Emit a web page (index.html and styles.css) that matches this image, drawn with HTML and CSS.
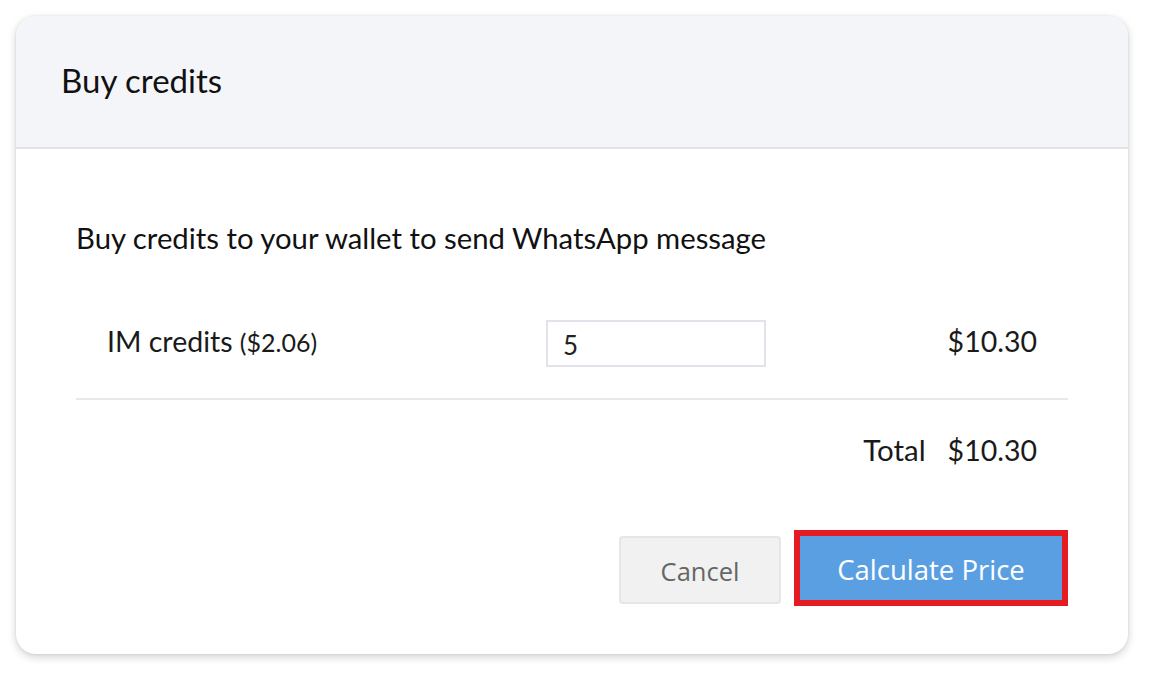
FILE: index.html
```html
<!DOCTYPE html>
<html>
<head>
<meta charset="utf-8">
<link rel="stylesheet" href="styles.css">
</head>
<body>
<div class="card">
  <div class="card-header">
    <h1 class="title">Buy credits</h1>
  </div>
  <div class="card-body">
    <p class="intro">Buy credits to your wallet to send WhatsApp message</p>
    <div class="item-row">
      <div class="item-label">IM credits <span class="unit">($2.06)</span></div>
      <div class="qty-box">5</div>
      <div class="item-price">$10.30</div>
    </div>
    <div class="total-row">
      <span class="total-label">Total</span>
      <span class="total-value">$10.30</span>
    </div>
    <div class="actions">
      <button class="btn btn-cancel">Cancel</button>
      <div class="highlight">
        <button class="btn btn-primary">Calculate Price</button>
      </div>
    </div>
  </div>
</div>
</body>
</html>
```

FILE: styles.css
```css
* { box-sizing: border-box; }
html, body { margin: 0; padding: 0; background: #ffffff; }
body {
  font-family: Lato, "Noto Sans", sans-serif;
  color: #1a1a1a;
  padding: 16px 24px 24px 16px;
}
.card {
  width: 1112px;
  height: 638px;
  border-radius: 20px;
  background: #ffffff;
  box-shadow: 0 3px 8px rgba(0,0,0,0.18), 0 0 3px rgba(0,0,0,0.08);
  overflow: hidden;
  display: flex;
  flex-direction: column;
}
.card-header {
  flex: none;
  height: 133px;
  background: #f4f5f9;
  border-bottom: 2px solid #e2e4ea;
  display: flex;
  align-items: center;
  padding-left: 45px;
  padding-bottom: 4px;
}
.title {
  margin: 0;
  font-size: 33px;
  font-weight: 400;
  color: #111;
}
.card-body {
  padding: 0 60px;
  display: flex;
  flex-direction: column;
}
.intro {
  margin: 71px 0 0 0;
  font-size: 29.3px;
  line-height: 36px;
  color: #111;
}
.item-row {
  margin-top: 64px;
  height: 80px;
  border-bottom: 2px solid #e8e8e8;
  display: grid;
  grid-template-columns: 439px 220px 1fr;
  align-items: start;
  padding: 0 31px;
}
.item-label {
  font-size: 28.5px;
  line-height: 36px;
  padding-top: 3px;
}
.unit { font-size: 25px; }
.qty-box {
  height: 47px;
  border: 2px solid #e0e3ea;
  font-size: 26px;
  color: #222;
  padding: 7px 0 0 15px;
  line-height: 32px;
}
.item-price {
  text-align: right;
  font-size: 28.5px;
  line-height: 36px;
  padding-top: 3px;
}
.total-row {
  display: flex;
  justify-content: flex-end;
  gap: 22px;
  padding: 32px 31px 0 0;
  font-size: 28.5px;
  line-height: 36px;
}
.total-label { font-size: 29.5px; }
.actions {
  margin-top: 62px;
  display: flex;
  justify-content: flex-end;
  align-items: center;
  gap: 13px;
}
.btn {
  font-family: "Open Sans", "Noto Sans", sans-serif;
  font-size: 27.5px;
  border-radius: 4px;
  cursor: pointer;
}
.btn-cancel {
  width: 162px;
  height: 68px;
  margin-top: 4px;
  background: #f1f1f1;
  border: 2px solid #e6e6e6;
  color: #666;
  font-size: 25.5px;
  padding: 2px 0 0 0;
}
.highlight {
  border: 6px solid #e41b23;
}
.btn-primary {
  display: block;
  width: 262px;
  height: 64px;
  border: none;
  border-radius: 0;
  background: #5b9fe3;
  color: #ffffff;
  padding: 3px 0 0 0;
}
```
